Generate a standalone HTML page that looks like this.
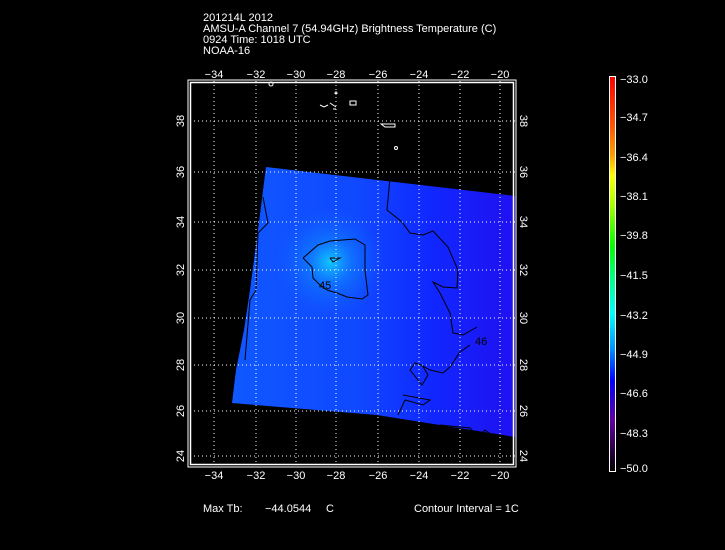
<!DOCTYPE html>
<html><head><meta charset="utf-8"><style>
html,body{margin:0;padding:0;background:#000;}
svg{display:block}
text{font-family:"Liberation Sans",sans-serif;fill:#fff;font-size:11px}
</style></head><body>
<svg width="725" height="550" viewBox="0 0 725 550" xmlns="http://www.w3.org/2000/svg">
<defs>
<linearGradient id="cb" x1="0" y1="0" x2="0" y2="1">
<stop offset="0" stop-color="#ff0000"/>
<stop offset="0.12" stop-color="#ff5000"/>
<stop offset="0.2" stop-color="#ffa000"/>
<stop offset="0.25" stop-color="#ffff00"/>
<stop offset="0.33" stop-color="#a0ff00"/>
<stop offset="0.43" stop-color="#00ff00"/>
<stop offset="0.52" stop-color="#00ff90"/>
<stop offset="0.6" stop-color="#00ffff"/>
<stop offset="0.69" stop-color="#0090ff"/>
<stop offset="0.77" stop-color="#0000ff"/>
<stop offset="0.87" stop-color="#6000a0"/>
<stop offset="1" stop-color="#000000"/>
</linearGradient>
<linearGradient id="sw" x1="0" y1="0" x2="1" y2="0">
<stop offset="0" stop-color="#1058ff"/>
<stop offset="0.45" stop-color="#1048ff"/>
<stop offset="0.7" stop-color="#1028ff"/>
<stop offset="1" stop-color="#2010f0"/>
</linearGradient>
<radialGradient id="hot" cx="330" cy="262" r="55" gradientUnits="userSpaceOnUse">
<stop offset="0" stop-color="#10c8ff" stop-opacity="1"/>
<stop offset="0.4" stop-color="#1088ff" stop-opacity="0.6"/>
<stop offset="1" stop-color="#1060ff" stop-opacity="0"/>
</radialGradient>
</defs>

<text x="203" y="21">201214L 2012</text>
<text x="203" y="32">AMSU-A Channel 7 (54.94GHz) Brightness Temperature (C)</text>
<text x="203" y="43">0924 Time: 1018 UTC</text>
<text x="203" y="54">NOAA-16</text>

<polygon points="266,167 515,196 515,437 377,415 232,403 236,370 244,330 250,290 258,230" fill="url(#sw)"/>
<polygon points="266,167 515,196 515,437 377,415 232,403 236,370 244,330 250,290 258,230" fill="url(#hot)"/>

<g fill="none" stroke="#000" stroke-width="1">
<polyline points="303,258 318,245 330,241 355,239 365,245 365,270 367,287 368,295 362,299 347,297 337,293 327,290 320,285 313,278 312,267 303,258"/>
<polyline points="330,258 340,258 333,262 330,258"/>
<polyline points="390,178 387,210 402,222 410,233 423,235 433,231 448,247 458,270 457,288 443,287 433,282 440,293 450,313 453,333 463,335 477,327"/>
<polyline points="470,345 460,352 450,367 443,373 430,370 421,365 415,363 410,370 422,385 428,375 422,365"/>
<polyline points="403,395 430,400 423,405 405,400 398,415"/>
<polyline points="263,197 268,223 258,233 256,290 250,300 245,360"/>
<polyline points="440,425 470,428 478,437 485,430 495,437"/>
</g>
<text x="475" y="345" font-size="9" style="fill:#000">46</text>
<text x="319" y="289" font-size="8" style="fill:#000">45</text>

<g fill="none" stroke="#fff" stroke-width="1">
<ellipse cx="271" cy="84" rx="2" ry="2"/>
<rect x="350" y="101" width="6" height="4"/>
<path d="M320,105 l4,2 l4,-2 M330,103 l6,4 M333,109 l3,0"/>
<path d="M381,124 l4,3 l10,0 l0,-3 l-8,0 z"/>
<circle cx="396" cy="148" r="1.5"/>
<circle cx="336" cy="93" r="1"/>
</g>

<g stroke="#fff" stroke-width="1" stroke-dasharray="1,3">
<line x1="214" y1="81" x2="214" y2="465"/>
<line x1="256" y1="81" x2="256" y2="465"/>
<line x1="296" y1="81" x2="296" y2="465"/>
<line x1="336" y1="81" x2="336" y2="465"/>
<line x1="378" y1="81" x2="378" y2="465"/>
<line x1="419" y1="81" x2="419" y2="465"/>
<line x1="460" y1="81" x2="460" y2="465"/>
<line x1="500" y1="81" x2="500" y2="465"/>
<line x1="190" y1="121" x2="515" y2="121"/>
<line x1="190" y1="172" x2="515" y2="172"/>
<line x1="190" y1="222" x2="515" y2="222"/>
<line x1="190" y1="270" x2="515" y2="270"/>
<line x1="190" y1="318" x2="515" y2="318"/>
<line x1="190" y1="365" x2="515" y2="365"/>
<line x1="190" y1="411" x2="515" y2="411"/>
<line x1="190" y1="456" x2="515" y2="456"/>
</g>

<rect x="188" y="80" width="328" height="387" fill="none" stroke="#fff" stroke-width="1"/>
<rect x="190.5" y="82.5" width="323" height="382" fill="none" stroke="#fff" stroke-width="1.5"/>

<g text-anchor="middle">
<text x="214" y="78">−34</text><text x="256" y="78">−32</text><text x="296" y="78">−30</text><text x="336" y="78">−28</text>
<text x="378" y="78">−26</text><text x="419" y="78">−24</text><text x="460" y="78">−22</text><text x="500" y="78">−20</text>
<text x="214" y="479">−34</text><text x="256" y="479">−32</text><text x="296" y="479">−30</text><text x="336" y="479">−28</text>
<text x="378" y="479">−26</text><text x="419" y="479">−24</text><text x="460" y="479">−22</text><text x="500" y="479">−20</text>
</g>
<g text-anchor="middle">
<text transform="translate(184,121) rotate(-90)">38</text>
<text transform="translate(184,172) rotate(-90)">36</text>
<text transform="translate(184,222) rotate(-90)">34</text>
<text transform="translate(184,270) rotate(-90)">32</text>
<text transform="translate(184,318) rotate(-90)">30</text>
<text transform="translate(184,365) rotate(-90)">28</text>
<text transform="translate(184,411) rotate(-90)">26</text>
<text transform="translate(184,456) rotate(-90)">24</text>
<text transform="translate(520,121) rotate(90)">38</text>
<text transform="translate(520,172) rotate(90)">36</text>
<text transform="translate(520,222) rotate(90)">34</text>
<text transform="translate(520,270) rotate(90)">32</text>
<text transform="translate(520,318) rotate(90)">30</text>
<text transform="translate(520,365) rotate(90)">28</text>
<text transform="translate(520,411) rotate(90)">26</text>
<text transform="translate(520,456) rotate(90)">24</text>
</g>

<rect x="609.5" y="76.5" width="6" height="395" fill="url(#cb)" stroke="#fff" stroke-width="1"/>
<g>
<text x="620" y="83">−33.0</text>
<text x="620" y="121">−34.7</text>
<text x="620" y="161">−36.4</text>
<text x="620" y="200">−38.1</text>
<text x="620" y="239">−39.8</text>
<text x="620" y="279">−41.5</text>
<text x="620" y="319">−43.2</text>
<text x="620" y="358">−44.9</text>
<text x="620" y="397">−46.6</text>
<text x="620" y="437">−48.3</text>
<text x="620" y="472">−50.0</text>
</g>

<text x="203" y="512">Max Tb:</text>
<text x="265" y="512">−44.0544</text>
<text x="326" y="512">C</text>
<text x="414" y="512">Contour Interval = 1C</text>
</svg>
</body></html>
